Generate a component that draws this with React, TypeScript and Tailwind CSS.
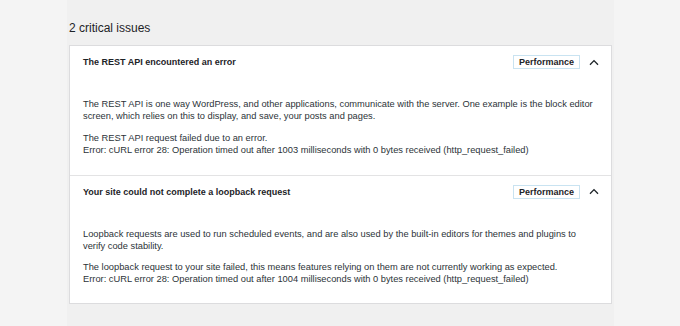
import React from 'react';

type Issue = {
  title: string;
  badge: string;
  lead: string[];
  detail: string[];
};

const issues: Issue[] = [
  {
    title: 'The REST API encountered an error',
    badge: 'Performance',
    lead: [
      'The REST API is one way WordPress, and other applications, communicate with the server. One example is the block editor',
      'screen, which relies on this to display, and save, your posts and pages.',
    ],
    detail: [
      'The REST API request failed due to an error.',
      'Error: cURL error 28: Operation timed out after 1003 milliseconds with 0 bytes received (http_request_failed)',
    ],
  },
  {
    title: 'Your site could not complete a loopback request',
    badge: 'Performance',
    lead: [
      'Loopback requests are used to run scheduled events, and are also used by the built-in editors for themes and plugins to',
      'verify code stability.',
    ],
    detail: [
      'The loopback request to your site failed, this means features relying on them are not currently working as expected.',
      'Error: cURL error 28: Operation timed out after 1004 milliseconds with 0 bytes received (http_request_failed)',
    ],
  },
];

const Lines: React.FC<{ lines: string[]; className?: string }> = ({ lines, className }) => (
  <p className={className}>
    {lines.map((l, i) => (
      <React.Fragment key={i}>
        {i > 0 && <br />}
        {l}
      </React.Fragment>
    ))}
  </p>
);

const IssueRow: React.FC<{ issue: Issue; first: boolean }> = ({ issue, first }) => (
  <div className={first ? 'pl-[13px] pr-[12px] pt-[9px] pb-[19px]' : 'border-t border-[#e3e3e4] pl-[13px] pr-[12px] pt-[9px] pb-[18px]'}>
    <div className="flex h-[14px] items-center justify-between">
      <h3 className="text-[9px] font-bold leading-[12px] text-[#1d2327]">{issue.title}</h3>
      <div className="flex items-center gap-[9px]">
        <span className="flex h-[14px] items-center border border-[#c9e3f1] px-[5px] text-[9px] font-bold leading-[12px] text-[#1d2327]">
          {issue.badge}
        </span>
        <svg width="10" height="7" viewBox="0 0 10 7" fill="none">
          <polyline points="1,5.8 5,1.6 9,5.8" stroke="#1d2327" strokeWidth="1.3" />
        </svg>
      </div>
    </div>
    <div className="mt-[29px] text-[9.3px] leading-[12px] text-[#2c3338]">
      <Lines lines={issue.lead} />
      <Lines lines={issue.detail} className="mt-[9.5px]" />
    </div>
  </div>
);

export default function App() {
  return (
    <div
      className="flex min-h-screen bg-[#f4f4f4]"
      style={{ fontFamily: '"Liberation Sans", Arial, sans-serif' }}
    >
      <div className="ml-[67px] w-[547px] bg-[#f0f0f0] px-[2px]">
        <h2 className="pt-[21px] text-[12px] leading-[14px] text-[#1d2327]">2 critical issues</h2>
        <div className="mt-[10px] border border-[#dcdcde] bg-white">
          {issues.map((issue, i) => (
            <IssueRow key={issue.title} issue={issue} first={i === 0} />
          ))}
        </div>
      </div>
    </div>
  );
}
